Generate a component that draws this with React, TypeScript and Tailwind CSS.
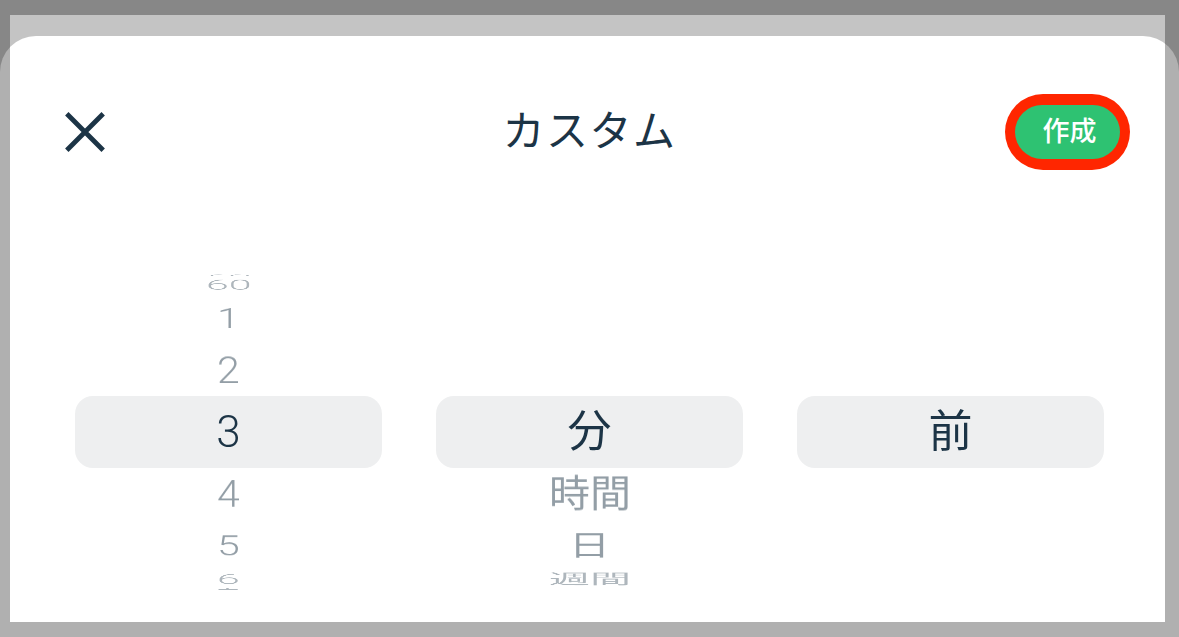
import React from "react";

const FONT = `"Liberation Sans", "Noto Sans CJK JP", sans-serif`;
const DIGIT_FONT = `Roboto, "Liberation Sans", "Noto Sans CJK JP", sans-serif`;

// wheel geometry: radius of the drum and the angle between rows
const RADIUS = 157;
const STEP = 23.2;

type WheelProps = {
  items: string[];
  selected: number;
  numeric?: boolean;
};

function Wheel({ items, selected, numeric }: WheelProps) {
  return (
    <div
      className={numeric ? "grid h-[340px] place-items-center overflow-hidden font-light" : "grid h-[340px] place-items-center overflow-hidden"}
      style={numeric ? { fontFamily: DIGIT_FONT } : undefined}
    >
      <div className="[grid-area:1/1] h-[72px] w-full rounded-[18px] bg-[#eeeff0]" />
      {items.map((label, i) => {
        const offset = i - selected;
        if (Math.abs(offset) > 4) return null;
        const isCurrent = offset === 0;
        const fade = Math.abs(offset) >= 3 ? 0.75 : 1;
        return (
          <div
            key={label + i}
            className={
              isCurrent
                ? "[grid-area:1/1] flex h-[62px] items-center justify-center text-[44px] leading-none text-[#1c3446]"
                : "[grid-area:1/1] flex h-[62px] items-center justify-center text-[41px] leading-none text-[#939ea6]"
            }
            style={{
              transform: `rotateX(${-offset * STEP}deg) translateZ(${RADIUS}px)`,
              opacity: fade,
            }}
          >
            {label}
          </div>
        );
      })}
    </div>
  );
}

function CloseIcon() {
  return (
    <svg width="40" height="40" viewBox="0 0 40 40" fill="none">
      <path d="M1.8 1.8L38.2 38.2M38.2 1.8L1.8 38.2" stroke="#1c3446" strokeWidth="4.8" />
    </svg>
  );
}

export default function App() {
  const numbers = ["59", "60", "1", "2", "3", "4", "5", "6", "7"];
  const units = ["分", "時間", "日", "週間"];
  const direction = ["前"];

  return (
    <div className="relative h-[637px] w-[1179px] overflow-hidden bg-[#c4c4c4]" style={{ fontFamily: FONT }}>
      <div className="mt-[36px] h-[601px] rounded-t-[36px] bg-white">
        <div className="box-content grid h-[80px] grid-cols-[1fr_auto_1fr] items-center pt-[56px]">
          <div className="justify-self-start pl-[65px]">
            <button className="flex h-[40px] w-[40px] items-center justify-center">
              <CloseIcon />
            </button>
          </div>
          <h1 className="text-[42px] font-normal leading-none tracking-[1.5px] text-[#1c3446]">カスタム</h1>
          <div className="justify-self-end pr-[49px]">
            <div className="rounded-full bg-[#ff2600] px-[10px] py-[11px]">
              <button className="flex h-[54px] w-[105px] items-center justify-center rounded-full bg-[#2ec272] pl-[4px] text-[27px] font-medium text-white">
                作成
              </button>
            </div>
          </div>
        </div>

        <div className="mt-[90px] grid grid-cols-3 gap-[54px] px-[75px]">
          <Wheel items={numbers} selected={4} numeric />
          <Wheel items={units} selected={0} />
          <Wheel items={direction} selected={0} />
        </div>
      </div>

      {/* dimmed frame around the edges */}
      <div className="pointer-events-none absolute inset-0 border-t-[15px] border-r-[14px] border-b-[15px] border-l-[10px] border-[#0000004f]" />
    </div>
  );
}
